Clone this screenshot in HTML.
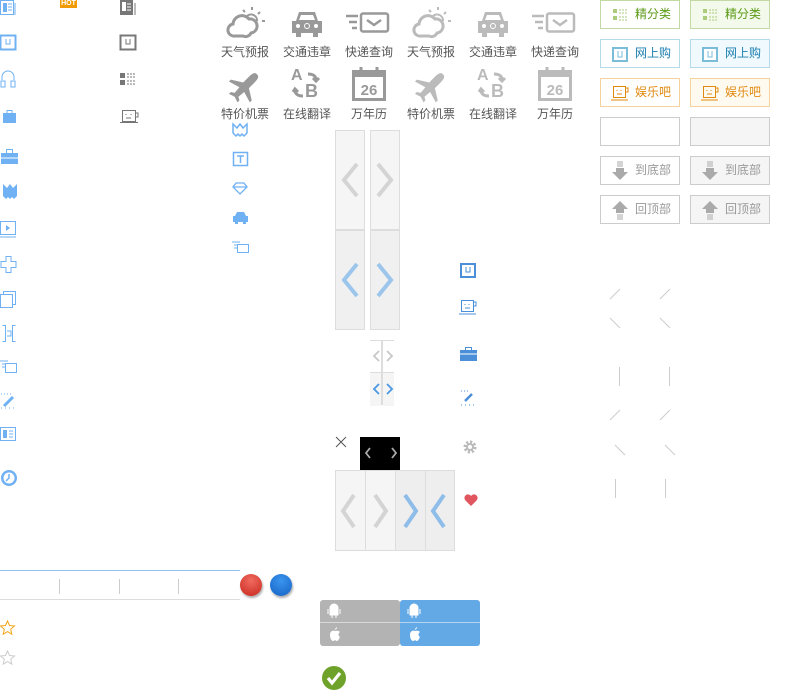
<!DOCTYPE html>
<html><head><meta charset="utf-8"><style>
body{margin:0;width:800px;height:700px;background:#fff;position:relative;overflow:hidden;font-family:"Liberation Sans","Noto Sans CJK SC",sans-serif}
.a{position:absolute}
.t{position:absolute;font-size:12px;color:#555;width:62px;text-align:center}
.btn{position:absolute;width:78px;height:27px;border:1px solid #ccc;font-size:12px;line-height:27px}
.btn span{position:absolute;left:34px}
.pan{position:absolute;box-sizing:border-box;border:1px solid #ddd;background:#f5f5f5}
svg{position:absolute;overflow:visible}
.ln{position:absolute;background:#ccc}
</style></head><body>

<!-- left blue column -->
<svg style="left:0;top:0" width="17" height="15"><rect x="0.5" y="0.5" width="13" height="14" fill="none" stroke="#6fb1f3"/><rect x="3" y="3" width="4" height="9" fill="#6fb1f3"/><path d="M8 4h4M8 7h4M8 10h4M15 3v12" stroke="#6fb1f3"/></svg>
<svg style="left:0;top:34" width="16" height="16"><rect x="0.5" y="1.5" width="15" height="14" fill="none" stroke="#6fb1f3" stroke-width="2"/><path d="M6 5v5h4V5" fill="none" stroke="#6fb1f3"/></svg>
<svg style="left:0;top:71" width="17" height="17"><path d="M2 9V6a6 6 0 0 1 12 0v3" fill="none" stroke="#6fb1f3"/><rect x="1" y="10" width="4" height="6" fill="none" stroke="#6fb1f3"/><rect x="11" y="10" width="4" height="6" fill="none" stroke="#6fb1f3"/></svg>
<svg style="left:1;top:110" width="17" height="14"><rect x="2" y="3" width="13" height="10" fill="#6fb1f3"/><rect x="6" y="0.5" width="5" height="3" fill="none" stroke="#6fb1f3"/></svg>
<svg style="left:1;top:149" width="17" height="15"><rect x="0" y="4" width="17" height="11" fill="#6fb1f3"/><rect x="5.5" y="0.5" width="6" height="4" fill="none" stroke="#6fb1f3"/><path d="M0 9h17" stroke="#fff"/></svg>
<svg style="left:2;top:183" width="16" height="17"><path d="M1 1l4 4 3-4 3 4 4-4v12l-3 3-2-2-2 2-2-2-2 2-3-3z" fill="#6fb1f3"/></svg>
<svg style="left:0;top:221" width="16" height="17"><rect x="0.5" y="0.5" width="15" height="13" fill="none" stroke="#6fb1f3"/><path d="M6 4l4 3-4 3z" fill="#6fb1f3"/><path d="M0 16h16" stroke="#6fb1f3"/></svg>
<svg style="left:0;top:256" width="17" height="17"><path d="M6 .5h5v5h5v6h-5v5H6v-5H1v-6h5z" fill="none" stroke="#6fb1f3"/></svg>
<svg style="left:0;top:291" width="16" height="17"><rect x="3.5" y="0.5" width="12" height="13" fill="none" stroke="#6fb1f3"/><rect x="0.5" y="3.5" width="12" height="13" fill="#fff" stroke="#6fb1f3"/></svg>
<svg style="left:2;top:325" width="14" height="17"><path d="M.5 .5h3v16h-3M13.5 .5h-3v16h3M5 6h4v5H5" fill="none" stroke="#6fb1f3"/></svg>
<svg style="left:0;top:360" width="17" height="13"><rect x="5.5" y="3.5" width="11" height="9" fill="none" stroke="#6fb1f3"/><path d="M0 1h8M2 4h3M2 7h3" stroke="#6fb1f3"/></svg>
<svg style="left:0;top:393" width="17" height="17"><path d="M4 13l9-9" stroke="#6fb1f3" stroke-width="3"/><path d="M1 1h1M4 1h1M7 1h1M10 1h1M1 15h1M5 15h1M9 15h1M13 15h1" stroke="#6fb1f3"/></svg>
<svg style="left:0;top:427" width="16" height="14"><rect x="0.5" y="0.5" width="15" height="13" fill="none" stroke="#6fb1f3"/><rect x="3" y="3" width="4" height="8" fill="#6fb1f3"/><path d="M9 4h4M9 7h4M9 10h4" stroke="#6fb1f3"/></svg>
<svg style="left:0;top:469" width="18" height="18"><circle cx="9" cy="9" r="8" fill="#6fb1f3"/><circle cx="9" cy="9" r="5.5" fill="#fff"/><path d="M9 5v4l-3 3" stroke="#6fb1f3" stroke-width="1.5" fill="none"/></svg>

<div class="a" style="left:60px;top:0;width:17px;height:8px;background:#f19b00;color:#fff;font-size:7px;line-height:8px;text-align:center;font-weight:bold">HOT</div>

<!-- gray column -->
<svg style="left:120;top:0" width="17" height="15"><rect x="0" y="0" width="13" height="15" fill="#777"/><rect x="2" y="2" width="4" height="9" fill="#fff"/><path d="M7 4h4M7 7h4M7 10h4" stroke="#fff"/><path d="M15 3v12" stroke="#777"/></svg>
<svg style="left:120;top:34" width="16" height="16"><rect x="0.5" y="1.5" width="15" height="14" fill="none" stroke="#777" stroke-width="2"/><path d="M6 5v5h4V5" fill="none" stroke="#777"/></svg>
<svg style="left:120;top:73" width="16" height="13"><rect x="0" y="0" width="5" height="5" fill="#777"/><rect x="0" y="7" width="5" height="5" fill="#777"/><path d="M7 1h9M7 4h9M7 8h9M7 11h9" stroke="#777" stroke-dasharray="2 1"/></svg>
<svg style="left:120;top:110" width="19" height="14"><rect x="2.5" y="0.5" width="13" height="11" fill="none" stroke="#777"/><path d="M15 3h3v4h-3M0 12.5h18M6 4v1M11 4v1M6 8h5" stroke="#777" fill="none"/></svg>

<!-- app grid -->
<div class="t" style="left:214px;top:43px">天气预报</div><div class="t" style="left:276px;top:43px">交通违章</div><div class="t" style="left:338px;top:43px">快递查询</div>
<div class="t" style="left:400px;top:43px">天气预报</div><div class="t" style="left:462px;top:43px">交通违章</div><div class="t" style="left:524px;top:43px">快递查询</div>
<div class="t" style="left:214px;top:105px">特价机票</div><div class="t" style="left:276px;top:105px">在线翻译</div><div class="t" style="left:338px;top:105px">万年历</div>
<div class="t" style="left:400px;top:105px">特价机票</div><div class="t" style="left:462px;top:105px">在线翻译</div><div class="t" style="left:524px;top:105px">万年历</div>

<svg style="left:225;top:6" width="40" height="32"><g fill="none" stroke="#999" stroke-width="3"><path d="M10 30a6 6 0 0 1-2-12 9 9 0 0 1 16-5 7 7 0 0 1 2 14 6 6 0 0 1-8 3z"/><path d="M22 10a6 6 0 0 1 10 5M27 1v3M18 4l2 2M35 6l-2 2M37 15h3" stroke-width="2"/></g></svg>
<svg style="left:411;top:6" width="40" height="32"><g fill="none" stroke="#bbb" stroke-width="3"><path d="M10 30a6 6 0 0 1-2-12 9 9 0 0 1 16-5 7 7 0 0 1 2 14 6 6 0 0 1-8 3z"/><path d="M22 10a6 6 0 0 1 10 5M27 1v3M18 4l2 2M35 6l-2 2M37 15h3" stroke-width="2"/></g></svg>
<svg style="left:290;top:10" width="34" height="27"><path d="M6 11l3-9h16l3 9h4v12h-4v4h-5v-4H11v4H6v-4H2V11z" fill="#999"/><path d="M9 10l2-5h12l2 5z" fill="#fff"/><circle cx="8" cy="16" r="2" fill="#fff"/><circle cx="26" cy="16" r="2" fill="#fff"/><circle cx="17" cy="16" r="2.5" fill="none" stroke="#fff"/></svg>
<svg style="left:476;top:10" width="34" height="27"><path d="M6 11l3-9h16l3 9h4v12h-4v4h-5v-4H11v4H6v-4H2V11z" fill="#bbb"/><path d="M9 10l2-5h12l2 5z" fill="#fff"/><circle cx="8" cy="16" r="2" fill="#fff"/><circle cx="26" cy="16" r="2" fill="#fff"/><circle cx="17" cy="16" r="2.5" fill="none" stroke="#fff"/></svg>
<svg style="left:346;top:12" width="46" height="22"><g stroke="#999" stroke-width="2.5" fill="none"><path d="M0 4h12M3 10h8M6 16h5"/><rect x="15" y="1.5" width="27" height="18" rx="2"/><path d="M21 8l7 5 7-5"/></g></svg>
<svg style="left:532;top:12" width="46" height="22"><g stroke="#bbb" stroke-width="2.5" fill="none"><path d="M0 4h12M3 10h8M6 16h5"/><rect x="15" y="1.5" width="27" height="18" rx="2"/><path d="M21 8l7 5 7-5"/></g></svg>
<svg style="left:228;top:72" width="32" height="30"><path d="M30 2c-2-2-5 0-8 3l-6 6L3 8 1 10l11 6-5 6-4-1-2 2 6 3 3 6 2-2-1-4 6-5 6 11 2-2-3-13 6-6c3-3 5-6 3-8z" fill="#999" transform="scale(.95)"/></svg>
<svg style="left:414;top:72" width="32" height="30"><path d="M30 2c-2-2-5 0-8 3l-6 6L3 8 1 10l11 6-5 6-4-1-2 2 6 3 3 6 2-2-1-4 6-5 6 11 2-2-3-13 6-6c3-3 5-6 3-8z" fill="#bbb" transform="scale(.95)"/></svg>
<div class="a" style="left:291px;top:67px;font:bold 16px 'Liberation Sans';color:#999">A</div><div class="a" style="left:305px;top:81px;font:bold 18px 'Liberation Sans';color:#999">B</div>
<svg style="left:290;top:70" width="34" height="32"><path d="M18 4c5 0 8 2 8 6M23 8l3 3 3-3M13 26c-5 0-8-2-8-6M3 22l2-3 3 3" stroke="#999" stroke-width="3" fill="none"/></svg>
<div class="a" style="left:477px;top:67px;font:bold 16px 'Liberation Sans';color:#bbb">A</div><div class="a" style="left:491px;top:81px;font:bold 18px 'Liberation Sans';color:#bbb">B</div>
<svg style="left:476;top:70" width="34" height="32"><path d="M18 4c5 0 8 2 8 6M23 8l3 3 3-3M13 26c-5 0-8-2-8-6M3 22l2-3 3 3" stroke="#bbb" stroke-width="3" fill="none"/></svg>
<svg style="left:352;top:67" width="34" height="34"><rect x="1.5" y="4.5" width="31" height="28" fill="none" stroke="#999" stroke-width="3"/><rect x="1" y="4" width="32" height="6" fill="#999"/><path d="M9 0v7M25 0v7" stroke="#999" stroke-width="3"/><text x="17" y="28" font-family="Liberation Sans" font-weight="bold" font-size="15" fill="#999" text-anchor="middle">26</text></svg>
<svg style="left:538;top:67" width="34" height="34"><rect x="1.5" y="4.5" width="31" height="28" fill="none" stroke="#bbb" stroke-width="3"/><rect x="1" y="4" width="32" height="6" fill="#bbb"/><path d="M9 0v7M25 0v7" stroke="#bbb" stroke-width="3"/><text x="17" y="28" font-family="Liberation Sans" font-weight="bold" font-size="15" fill="#bbb" text-anchor="middle">26</text></svg>

<!-- small blue icons -->
<svg style="left:232;top:123" width="16" height="13"><path d="M1 1l4 4 3-4 3 4 4-4v9l-3 3-2-2-2 2-2-2-2 2-3-3z" fill="none" stroke="#6fb1f3" stroke-width="1.5"/></svg>
<svg style="left:233;top:152" width="15" height="14"><rect x="0.5" y="0.5" width="14" height="13" fill="none" stroke="#6fb1f3" stroke-width="1.5"/><path d="M4 4h7M7.5 4v7" stroke="#6fb1f3" stroke-width="1.5"/></svg>
<svg style="left:232;top:182" width="16" height="13"><path d="M4 1h8l3 4-7 7-7-7zM1 5h14" fill="none" stroke="#6fb1f3" stroke-width="1.3"/></svg>
<svg style="left:232;top:211" width="17" height="13"><path d="M3 5l2-4h7l2 4h2v6H1V5z" fill="#6fb1f3"/><rect x="3" y="10" width="3" height="3" fill="#6fb1f3"/><rect x="11" y="10" width="3" height="3" fill="#6fb1f3"/></svg>
<svg style="left:232;top:241" width="17" height="12"><rect x="5.5" y="3.5" width="11" height="8" fill="none" stroke="#6fb1f3"/><path d="M0 1h8M2 4h3M2 7h3" stroke="#6fb1f3"/></svg>

<!-- arrow panels -->
<div class="pan" style="left:335px;top:130px;width:30px;height:100px"></div>
<div class="pan" style="left:370px;top:130px;width:30px;height:100px"></div>
<svg style="left:341;top:163" width="20" height="34"><path d="M16 1L3 17l13 16" stroke="#d4d4d4" stroke-width="4" fill="none"/></svg>
<svg style="left:374;top:163" width="20" height="34"><path d="M4 1l13 16L4 33" stroke="#d4d4d4" stroke-width="4" fill="none"/></svg>
<div class="pan" style="left:335px;top:230px;width:30px;height:100px;background:#f0f0f0"></div>
<div class="pan" style="left:370px;top:230px;width:30px;height:100px;background:#f0f0f0"></div>
<svg style="left:341;top:263" width="20" height="34"><path d="M16 1L3 17l13 16" stroke="#9cc5ec" stroke-width="4" fill="none"/></svg>
<svg style="left:374;top:263" width="20" height="34"><path d="M4 1l13 16L4 33" stroke="#9cc5ec" stroke-width="4" fill="none"/></svg>

<div class="a" style="left:370px;top:340px;width:24px;height:32px;background:#fff;border-top:1px solid #ddd"></div>
<div class="a" style="left:381px;top:340px;width:2px;height:65px;background:#ddd"></div>
<div class="a" style="left:370px;top:372px;width:11px;height:33px;background:#f5f5f5;border-top:1px solid #ddd"></div>
<div class="a" style="left:383px;top:372px;width:11px;height:33px;background:#f5f5f5;border-top:1px solid #ddd"></div>
<svg style="left:372;top:350" width="22" height="12"><path d="M7 1L2 6l5 5M15 1l5 5-5 5" stroke="#c8c8c8" stroke-width="1.8" fill="none"/></svg>
<svg style="left:372;top:383" width="22" height="12"><path d="M7 1L2 6l5 5M15 1l5 5-5 5" stroke="#4a97e2" stroke-width="1.8" fill="none"/></svg>

<svg style="left:336;top:437" width="11" height="11"><path d="M0 0l10 10M10 0L0 10" stroke="#555" stroke-width="1"/></svg>
<div class="a" style="left:360px;top:437px;width:40px;height:33px;background:#000"></div>
<svg style="left:364;top:447" width="34" height="12"><path d="M6 1L2 6l4 5M28 1l4 5-4 5" stroke="#aaa" stroke-width="1.8" fill="none"/></svg>

<div class="pan" style="left:335px;top:470px;width:31px;height:81px"></div>
<div class="pan" style="left:365px;top:470px;width:31px;height:81px"></div>
<div class="pan" style="left:395px;top:470px;width:31px;height:81px;background:#eee"></div>
<div class="pan" style="left:425px;top:470px;width:30px;height:81px;background:#eee"></div>
<svg style="left:340;top:494" width="16" height="34"><path d="M14 1L3 17l11 16" stroke="#d4d4d4" stroke-width="4" fill="none"/></svg>
<svg style="left:373;top:494" width="16" height="34"><path d="M2 1l11 16L2 33" stroke="#d4d4d4" stroke-width="4" fill="none"/></svg>
<svg style="left:403;top:494" width="16" height="34"><path d="M2 1l11 16L2 33" stroke="#8fbde9" stroke-width="4" fill="none"/></svg>
<svg style="left:430;top:494" width="16" height="34"><path d="M14 1L3 17l11 16" stroke="#8fbde9" stroke-width="4" fill="none"/></svg>

<!-- right column icons -->
<svg style="left:460;top:262" width="16" height="16"><rect x="1" y="2" width="14" height="13" fill="none" stroke="#4a8fd8" stroke-width="2"/><path d="M6 5v5h4V5" fill="none" stroke="#4a8fd8"/></svg>
<svg style="left:459;top:300" width="19" height="15"><rect x="2.5" y="0.5" width="12" height="11" fill="none" stroke="#4a8fd8"/><path d="M14 2h3v4h-3M0 14h17M6 4v1M10 4v1M6 8h5" stroke="#4a8fd8" fill="none"/></svg>
<svg style="left:460;top:347" width="17" height="14"><rect x="0" y="3" width="17" height="11" fill="#4a8fd8"/><rect x="5.5" y="0.5" width="6" height="3" fill="none" stroke="#4a8fd8"/><path d="M0 7h17" stroke="#fff"/></svg>
<svg style="left:460;top:390" width="17" height="17"><path d="M5 11l7-7" stroke="#4a8fd8" stroke-width="2.5"/><path d="M1 1h1M4 1h1M7 1h1M1 15h1M5 15h1M9 15h1M13 15h1" stroke="#4a8fd8"/></svg>
<svg style="left:463;top:440" width="14" height="14"><circle cx="7" cy="7" r="5" fill="none" stroke="#bbb" stroke-width="3" stroke-dasharray="2.2 1.7"/><circle cx="7" cy="7" r="3" fill="none" stroke="#bbb" stroke-width="2"/></svg>
<svg style="left:464;top:494" width="14" height="13"><path d="M7 12L1 6a3 3 0 0 1 6-4 3 3 0 0 1 6 4z" fill="#e0555e"/></svg>

<!-- buttons -->
<div class="btn" style="left:600px;top:0;border-color:#c2d9a4;color:#5c9a18"><svg style="left:12;top:8" width="16" height="12"><rect x="0" y="0" width="4" height="4" fill="#a9cb7b"/><rect x="0" y="7" width="4" height="4" fill="#a9cb7b"/><path d="M6 1h9M6 4h9M6 8h9M6 11h9" stroke="#a9cb7b" stroke-dasharray="2 1"/></svg><span>精分类</span></div>
<div class="btn" style="left:690px;top:0;border-color:#c2d9a4;background:#f3faeb;color:#5c9a18"><svg style="left:12;top:8" width="16" height="12"><rect x="0" y="0" width="4" height="4" fill="#a9cb7b"/><rect x="0" y="7" width="4" height="4" fill="#a9cb7b"/><path d="M6 1h9M6 4h9M6 8h9M6 11h9" stroke="#a9cb7b" stroke-dasharray="2 1"/></svg><span>精分类</span></div>
<div class="btn" style="left:600px;top:39px;border-color:#b5dbea;color:#1c7fb0"><svg style="left:11;top:6" width="16" height="16"><rect x="1" y="2" width="14" height="13" fill="#fff" stroke="#7bbcd8" stroke-width="2"/><path d="M6 5v6h4V5" fill="none" stroke="#7bbcd8"/></svg><span>网上购</span></div>
<div class="btn" style="left:690px;top:39px;border-color:#b5dbea;background:#f0f9fd;color:#1c7fb0"><svg style="left:11;top:6" width="16" height="16"><rect x="1" y="2" width="14" height="13" fill="#fff" stroke="#7bbcd8" stroke-width="2"/><path d="M6 5v6h4V5" fill="none" stroke="#7bbcd8"/></svg><span>网上购</span></div>
<div class="btn" style="left:600px;top:78px;border-color:#f3d29c;color:#e08a10"><svg style="left:10;top:7" width="19" height="15"><rect x="2.5" y="0.5" width="12" height="11" fill="none" stroke="#e08a10"/><path d="M14 2h3v4h-3M0 14h17M6 4v1M10 4v1M6 8h5" stroke="#e08a10" fill="none"/></svg><span>娱乐吧</span></div>
<div class="btn" style="left:690px;top:78px;border-color:#f3d29c;background:#fffaf0;color:#e08a10"><svg style="left:10;top:7" width="19" height="15"><rect x="2.5" y="0.5" width="12" height="11" fill="none" stroke="#e08a10"/><path d="M14 2h3v4h-3M0 14h17M6 4v1M10 4v1M6 8h5" stroke="#e08a10" fill="none"/></svg><span>娱乐吧</span></div>
<div class="btn" style="left:600px;top:117px"></div>
<div class="btn" style="left:690px;top:117px;background:#f5f5f5"></div>
<div class="btn" style="left:600px;top:156px;color:#999"><svg style="left:10;top:5" width="18" height="19"><path d="M6 0h6M6 2h6M6 4h6" stroke="#aaa"/><path d="M5 6h8v4h4l-8 8-8-8h4z" fill="#aaa"/></svg><span>到底部</span></div>
<div class="btn" style="left:690px;top:156px;background:#f5f5f5;color:#999"><svg style="left:10;top:5" width="18" height="19"><path d="M6 0h6M6 2h6M6 4h6" stroke="#aaa"/><path d="M5 6h8v4h4l-8 8-8-8h4z" fill="#aaa"/></svg><span>到底部</span></div>
<div class="btn" style="left:600px;top:195px;color:#999"><svg style="left:10;top:5" width="18" height="19"><path d="M9 0l8 8h-4v4H5V8H1z" fill="#aaa"/><path d="M6 14h6M6 16h6M6 18h6" stroke="#aaa"/></svg><span>回顶部</span></div>
<div class="btn" style="left:690px;top:195px;background:#f5f5f5;color:#999"><svg style="left:10;top:5" width="18" height="19"><path d="M9 0l8 8h-4v4H5V8H1z" fill="#aaa"/><path d="M6 14h6M6 16h6M6 18h6" stroke="#aaa"/></svg><span>回顶部</span></div>

<!-- diagonal lines -->
<svg style="left:600;top:280" width="100" height="230"><g stroke="#ccc" stroke-width="1"><path d="M10 19l10-10M60 19l10-10M10 38l10 10M60 38l10 10M19.5 87v19M69.5 87v19M10 140l10-10M60 140l10-10M15 165l10 10M65 165l10 10M15.5 199v19M65.5 199v19"/></g></svg>

<!-- bottom -->
<div class="a" style="left:0;top:570px;width:240px;height:1px;background:#8cc4f3"></div>
<div class="a" style="left:0;top:599px;width:240px;height:1px;background:#ddd"></div>
<div class="ln" style="left:59px;top:579px;width:1px;height:15px"></div>
<div class="ln" style="left:119px;top:579px;width:1px;height:15px"></div>
<div class="ln" style="left:178px;top:579px;width:1px;height:15px"></div>
<div class="a" style="left:240px;top:574px;width:22px;height:22px;border-radius:50%;background:radial-gradient(circle at 50% 30%,#f06a60,#c8281c);box-shadow:1px 2px 2px #aaa"></div>
<div class="a" style="left:270px;top:574px;width:22px;height:22px;border-radius:50%;background:radial-gradient(circle at 50% 30%,#3a95ee,#1562c4);box-shadow:1px 2px 2px #aaa"></div>
<svg style="left:0;top:620" width="15" height="15"><path d="M7.5 1l2 4.5 5 .5-3.8 3.3 1.1 4.9-4.3-2.6-4.3 2.6 1.1-4.9L.5 6l5-.5z" fill="none" stroke="#f2a51a"/></svg>
<svg style="left:0;top:650" width="15" height="15"><path d="M7.5 1l2 4.5 5 .5-3.8 3.3 1.1 4.9-4.3-2.6-4.3 2.6 1.1-4.9L.5 6l5-.5z" fill="none" stroke="#ccc"/></svg>

<div class="a" style="left:320px;top:600px;width:80px;height:46px;background:#b3b3b3;border-radius:3px"></div>
<div class="a" style="left:400px;top:600px;width:80px;height:46px;background:#63a9e6;border-radius:3px"></div>
<div class="a" style="left:320px;top:622px;width:160px;height:1px;background:#fff;opacity:.5"></div>
<svg style="left:327;top:604" width="14" height="14"><path d="M3 4a4 4 0 0 1 8 0zM3 5h8v6H3zM1 5v5M13 5v5M5 11v3M9 11v3" stroke="#fff" fill="#fff" stroke-width="1"/></svg>
<svg style="left:407;top:604" width="14" height="14"><path d="M3 4a4 4 0 0 1 8 0zM3 5h8v6H3zM1 5v5M13 5v5M5 11v3M9 11v3" stroke="#fff" fill="#fff" stroke-width="1"/></svg>
<svg style="left:328;top:626" width="14" height="16"><path d="M9 1c0 2-2 3-2 3 0-2 2-3 2-3zM7 5c-2-1-5 0-5 4s2 6 3 6 2-1 2-1 1 1 2 1 2-2 3-4c-2-1-2-4 0-5-2-2-4-1-5-1z" fill="#fff"/></svg>
<svg style="left:408;top:626" width="14" height="16"><path d="M9 1c0 2-2 3-2 3 0-2 2-3 2-3zM7 5c-2-1-5 0-5 4s2 6 3 6 2-1 2-1 1 1 2 1 2-2 3-4c-2-1-2-4 0-5-2-2-4-1-5-1z" fill="#fff"/></svg>

<svg style="left:322;top:666" width="24" height="24"><circle cx="12" cy="12" r="12" fill="#6fa22a"/><path d="M6 12l4 5 8-10" stroke="#fff" stroke-width="3.2" fill="none"/></svg>
</body></html>
